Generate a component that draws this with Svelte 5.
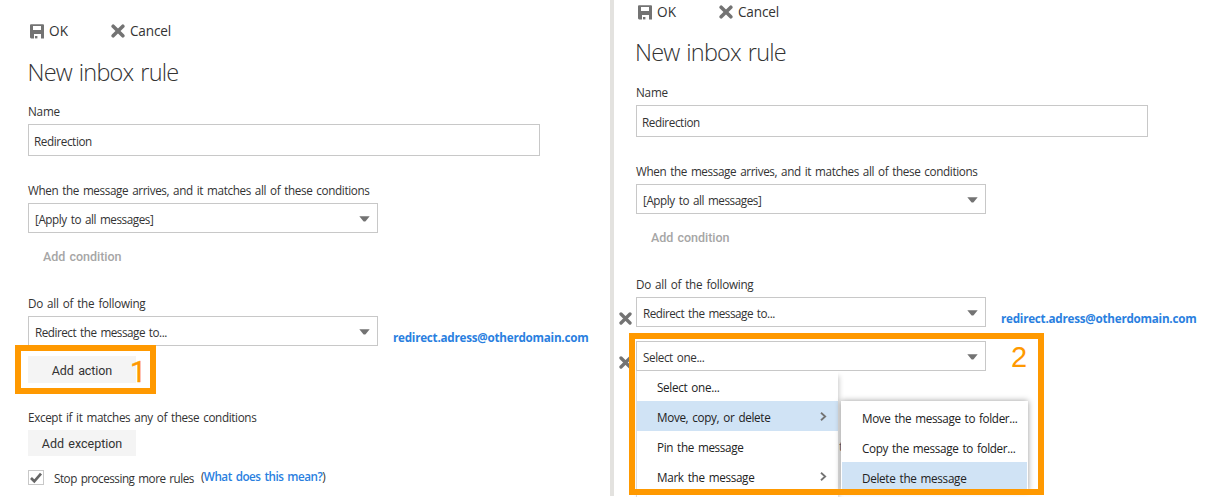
<script>
  const email = 'redirect.adress@otherdomain.com';
  const menu = [
    { text: 'Select one...', w: 62 },
    { text: 'Move, copy, or delete', w: 113, more: true, active: true },
    { text: 'Pin the message', w: 86 },
    { text: 'Mark the message', w: 97, more: true }
  ];
  const submenu = [
    { text: 'Move the message to folder...', w: 155 },
    { text: 'Copy the message to folder...', w: 153 },
    { text: 'Delete the message', w: 104, active: true }
  ];

  // Tracks a label out (or in) so that it takes the given measure.
  function fit(node, width) {
    const natural = node.getBoundingClientRect().width;
    node.style.letterSpacing = `${(width + 0.4 - natural) / node.textContent.length}px`;
  }
</script>

{#snippet label(text, w, cls = '')}
  <span class="t {cls}" use:fit={w}>{text}</span>
{/snippet}

{#snippet cross(size)}
  <svg class="cross" width={size} height={size} viewBox="0 0 13 13">
    <path d="M2 2L11 11M11 2L2 11" stroke="#737373" stroke-width="3.3" stroke-linecap="round" />
  </svg>
{/snippet}

{#snippet select(text, w)}
  <div class="select">
    {@render label(text, w)}
    <svg width="11" height="6" viewBox="0 0 11 6"><path d="M.3 .3H10.7L6.6 5.2Q5.5 6 4.4 5.2Z" fill="#737373" /></svg>
  </div>
{/snippet}

{#snippet head()}
  <div class="toolbar">
    <div class="command">
      <svg width="14" height="15" viewBox="0 0 14 15">
        <path fill="#737373" fill-rule="evenodd" d="M1 .3H13Q14 .3 14 1.3V14.4H11V10H4V14.4H1L0 13.4V1.3Q0 .3 1 .3ZM3 2V6H11V2Z" />
        <path fill="#737373" d="M5 12H7.4V14.4H5Z" />
      </svg>
      {@render label('OK', 19)}
    </div>
    <div class="command cancel">
      {@render cross(14)}
      {@render label('Cancel', 40.5)}
    </div>
  </div>
  <h1>{@render label('New inbox rule', 150.5)}</h1>
  <div class="label name">{@render label('Name', 31.5)}</div>
  <div class="input">{@render label('Redirection', 57.5)}</div>
  <div class="label when">{@render label('When the message arrives, and it matches all of these conditions', 341)}</div>
  {@render select('[Apply to all messages]', 118)}
  <div class="condition">{@render label('Add condition', 78, 'ui strong')}</div>
  <div class="label do">{@render label('Do all of the following', 117)}</div>
{/snippet}

<main>
  <section class="pane left">
    {@render head()}
    <div class="action">
      <i></i>
      {@render select('Redirect the message to...', 131.5)}
      <div class="email">{@render label(email, 195)}</div>
    </div>
    <div class="button add">
      {@render label('Add action', 60, 'ui')}
      <div class="callout one"><b>1</b></div>
    </div>
    <div class="label except">{@render label('Except if it matches any of these conditions', 228)}</div>
    <div class="button">{@render label('Add exception', 80, 'ui')}</div>
    <div class="check">
      <span class="box">
        <svg width="14" height="13" viewBox="0 0 14 13"><path d="M2 7L5.3 10.3L12 2.6" fill="none" stroke="#666" stroke-width="2.7" /></svg>
      </span>
      {@render label('Stop processing more rules', 139.5)}
      <span class="help t" use:fit={124}>(<a href="#help">What does this mean?</a>)</span>
    </div>
  </section>

  <section class="pane right">
    {@render head()}
    <div class="action">
      {@render cross(13)}
      {@render select('Redirect the message to...', 131.5)}
      <div class="email">{@render label(email, 195)}</div>
    </div>
    <div class="action second">
      {@render cross(13)}
      <div class="dropdown">
        {@render select('Select one...', 61)}
        <span class="behind">t</span>
        <div class="menu">
          {#each menu as item}
            <div class="item" class:active={item.active}>
              {@render label(item.text, item.w)}
              {#if item.more}
                <svg width="7" height="9" viewBox="0 0 7 9"><path d="M1 .8L5.2 4.5L1 8.2" fill="none" stroke="#737373" stroke-width="1.8" /></svg>
              {/if}
            </div>
          {/each}
        </div>
        <div class="submenu">
          {#each submenu as item}
            <div class="item" class:active={item.active}>{@render label(item.text, item.w)}</div>
          {/each}
        </div>
        <div class="callout two"><b>2</b></div>
      </div>
    </div>
  </section>
</main>

<style>
  :global(body) { margin: 0; background: #fff; overflow: hidden; }
  main {
    display: flex; width: 1215px; height: 497px; overflow: hidden;
    font: 11.7px/16px "Open Sans", "Noto Sans", sans-serif; color: #333; word-spacing: 1.3px;
  }
  main * { box-sizing: border-box; }
  svg { display: block; flex: none; }
  .t { white-space: pre; display: inline-block; flex: none; }
  .ui { font-family: Roboto, sans-serif; font-size: 12.5px; font-weight: 400; }
  .strong { font-weight: 500; }
  .pane { display: flex; flex-direction: column; align-items: flex-start; }
  .left { width: 610px; padding: 21px 0 0 28px; flex: none; }
  .right { flex: 1; padding: 2px 0 0 22px; position: relative; border-left: 4px solid #e3e2df; height: 496px; }
  .toolbar { display: flex; height: 20px; align-items: center; font-size: 13.6px; line-height: 20px; padding-left: 2px; }
  .command { display: flex; align-items: center; gap: 5px; width: 81px; }
  .cancel { width: auto; }
  h1 { margin: 17px 0 0 -.5px; height: 30px; font-size: 23.5px; line-height: 29px; font-weight: 300; word-spacing: 1.5px; }
  .right h1 { margin-left: -1px; line-height: 27px; }
  .label { height: 16px; margin-bottom: 5px; line-height: 17px; }
  .name { margin-top: 15px; line-height: 16px; }
  .input { width: 512px; height: 32px; border: 1px solid #c8c8c8; padding: 8px 5px; line-height: 17px; }
  .when { margin-top: 26px; }
  .select { width: 350px; height: 30px; flex: none; border: 1px solid #c8c8c8; display: flex; align-items: center; justify-content: space-between; padding: 0 7px 0 6px; line-height: 18px; background: #fff; }
  .select .t { padding-top: 2px; }
  .select svg { margin: 2px 0 0; }
  .condition { margin: 15px 0 0 15px; height: 16px; color: #a6a6a6; }
  .do { margin-top: 31px; }
  .action { display: flex; margin-left: -17px; }
  .action > i { width: 17px; }
  .action > .cross { margin: 15px 4px 0 0; }
  .email { margin: 13px 0 0 15px; color: #2a7fdf; font-weight: 700; font-size: 11.7px; }
  .second { margin-top: 14px; }
  .button { width: 108px; height: 26px; background: #f4f4f4; display: flex; align-items: center; justify-content: center; padding-top: 1px; }
  .add { height: 27px; margin-top: 10px; position: relative; padding-top: 3px; }
  .except { margin-top: 26px; }
  .check { display: flex; margin-top: 14px; height: 16px; line-height: 17px; }
  .box { width: 16px; height: 15px; border: 1px solid #c8c8c8; margin-right: 10px; }
  .help { margin: -2px 0 0 7px; }
  .help a { color: #2a7fdf; text-decoration: none; font-weight: 600; }
  .callout { position: absolute; border: 6px solid #f90; color: #f90; z-index: 5; }
  .callout b { position: absolute; font: 400 29px/30px Roboto, sans-serif; }
  .one { left: -13px; top: -11px; width: 141px; height: 49px; }
  .one b { left: 109px; top: 6px; -webkit-text-stroke: .4px #f90; }
  .two { left: -7px; top: -8px; width: 415px; height: 162px; }
  .two b { left: 376px; top: 3px; font-family: "Liberation Sans", sans-serif; }
  .dropdown { position: relative; }
  .menu { position: absolute; left: 0; top: 30px; width: 202px; height: 126px; background: #fff; border-left: 1px solid #ddd; box-shadow: 2px 4px 5px -1px rgba(0, 0, 0, .22); z-index: 2; }
  .item { height: 30px; display: flex; align-items: center; justify-content: space-between; padding: 1px 11px 0 20px; color: #222; }
  .active { background: #d0e3f5; }
  .behind { position: absolute; left: 203px; top: 97px; z-index: 3; width: 3px; overflow: hidden; color: #666; }
  .submenu { position: absolute; left: 205px; top: 60px; width: 187px; height: 90px; background: #fff; border: 1px solid #fff; box-shadow: 0 0 6px rgba(0, 0, 0, .4); z-index: 4; }
</style>
